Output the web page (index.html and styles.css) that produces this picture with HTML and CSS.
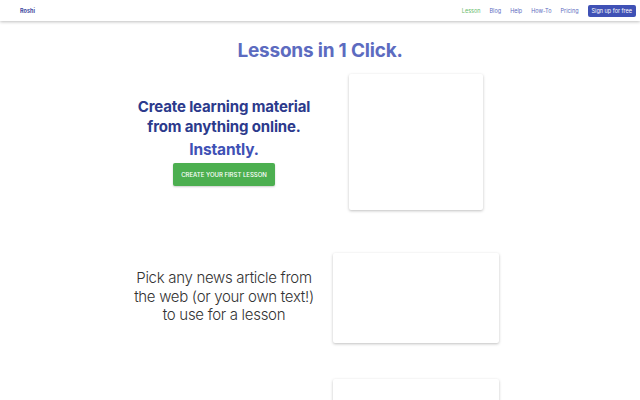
FILE: index.html
```html
<!DOCTYPE html>
<html>
<head>
<meta charset="utf-8">
<link rel="stylesheet" href="styles.css">
</head>
<body>
<header class="nav">
  <a class="brand">Roshi</a>
  <nav class="links">
    <a class="link active">Lesson</a>
    <a class="link">Blog</a>
    <a class="link">Help</a>
    <a class="link">How-To</a>
    <a class="link">Pricing</a>
    <a class="signup">Sign up for free</a>
  </nav>
</header>
<main class="main">
  <h1 class="title">Lessons in 1 Click.</h1>
  <section class="row row-hero">
    <div class="col col-text">
      <h2 class="hero-head">Create learning material from anything online.</h2>
      <p class="hero-sub">Instantly.</p>
      <button class="cta">CREATE YOUR FIRST LESSON</button>
    </div>
    <div class="col col-media">
      <div class="card card-square"></div>
    </div>
  </section>
  <section class="row row-feature">
    <div class="col col-text">
      <p class="feature-text">Pick any news article from the web (or your own text!) to use for a lesson</p>
    </div>
    <div class="col col-media">
      <div class="card card-wide"></div>
    </div>
  </section>
  <section class="row row-feature">
    <div class="col col-text"></div>
    <div class="col col-media">
      <div class="card card-wide"></div>
    </div>
  </section>
</main>
</body>
</html>
```
FILE: styles.css
```css
* { box-sizing: border-box; }
body {
  margin: 0;
  font-family: Inter, "Noto Sans", sans-serif;
  background: #fff;
  color: #333;
}
.nav {
  height: 21px;
  display: flex;
  align-items: center;
  justify-content: space-between;
  padding: 0 4px 0 20px;
  background: #fff;
  box-shadow: 0 1px 3px rgba(0,0,0,0.25);
  position: relative;
}
.brand {
  font-size: 5.5px;
  font-weight: 700;
  color: #3f4aa0;
}
.links {
  display: flex;
  align-items: center;
  gap: 9px;
}
.link {
  font-size: 5.5px;
  color: #5c6bc0;
}
.link.active { color: #66bb6a; }
.signup {
  font-size: 5.5px;
  color: #fff;
  background: #3f51b5;
  padding: 3px 4px;
  border-radius: 2px;
}
.main {
  width: 384px;
  margin: 0 auto;
  padding-top: 18px;
}
.title {
  margin: 0;
  text-align: center;
  font-size: 19px;
  font-weight: 700;
  letter-spacing: -0.2px;
  color: #5c6bc0;
  line-height: 24px;
}
.row {
  display: grid;
  grid-template-columns: 1fr 1fr;
  align-items: center;
}
.row-hero { margin-top: 11px; }
.row-feature { margin-top: 43px; }
.row-feature + .row-feature { margin-top: 36px; }
.col {
  display: flex;
  flex-direction: column;
  align-items: center;
  text-align: center;
}
.col-text { padding-bottom: 2px; }
.hero-head {
  margin: 0;
  font-size: 15px;
  font-weight: 700;
  letter-spacing: -0.15px;
  line-height: 20px;
  color: #2c3a8c;
}
.hero-sub {
  margin: 3px 0 0;
  font-size: 15.5px;
  font-weight: 700;
  letter-spacing: -0.15px;
  line-height: 20px;
  color: #3f51b5;
}
.cta {
  margin-top: 3px;
  border: 0;
  background: #4caf50;
  color: #fff;
  font-family: inherit;
  font-size: 6px;
  font-weight: 500;
  white-space: nowrap;
  height: 23px;
  width: 102px;
  padding: 0;
  border-radius: 2px;
  box-shadow: 0 1px 2px rgba(0,0,0,0.2);
}
.card {
  background: #fff;
  box-shadow: 0 1px 3px rgba(0,0,0,0.25);
  border-radius: 2px;
}
.card-square { width: 134px; height: 136px; }
.card-wide { width: 166px; height: 90px; }
.feature-text {
  margin: 0;
  font-size: 15px;
  font-weight: 300;
  letter-spacing: -0.3px;
  line-height: 18.5px;
  color: #333;
}
```
